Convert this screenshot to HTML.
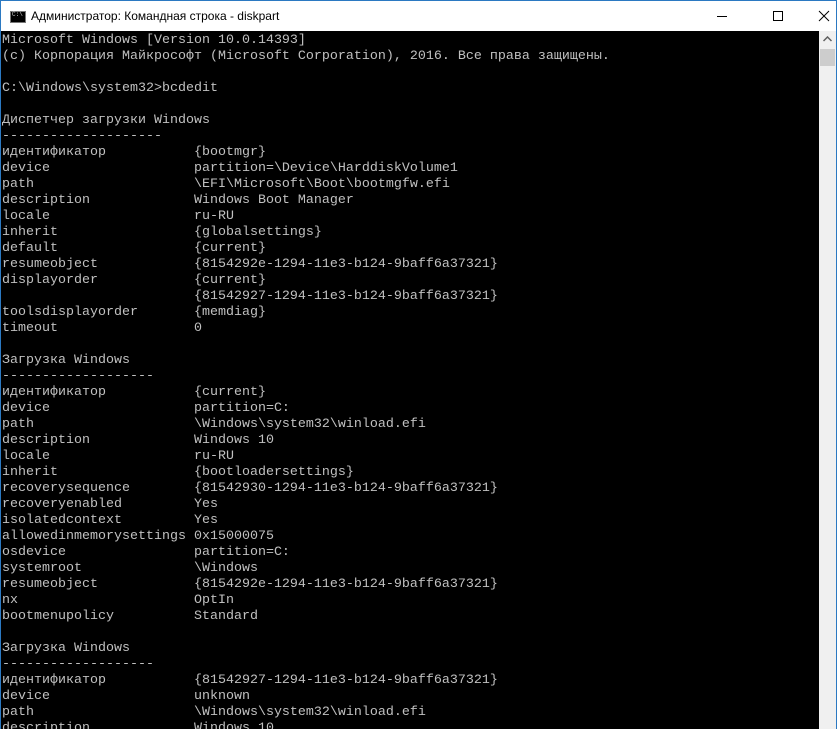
<!DOCTYPE html>
<html><head><meta charset="utf-8"><style>
html,body{margin:0;padding:0;width:837px;height:728px;overflow:hidden;background:#fff}
.win{position:absolute;left:0;top:0;width:835px;height:728px;border:1px solid #2b79c2;border-bottom:none;background:#fff}
.title{position:absolute;left:0;top:0;width:835px;height:30px;background:#fff;font-family:"Liberation Sans",sans-serif;font-size:12px;color:#000}
.title .t{position:absolute;left:30px;top:8px}
.icon{position:absolute;left:9px;top:10px;width:14px;height:10px;background:#000;border:1px solid #777}
.icon:after{content:"C:\\";position:absolute;left:1px;top:-1px;font-size:6px;color:#ccc;font-family:"Liberation Mono",monospace}
.con{position:absolute;left:0;top:30px;width:818px;height:698px;background:#000;overflow:hidden}
pre{margin:0;padding:2px 0 0 1px;font-family:"Liberation Mono",monospace;font-size:13.33px;line-height:16px;color:#c0c0c0}
.sb{position:absolute;left:818px;top:30px;width:17px;height:698px;background:#f0f0f0}
.thumb{position:absolute;left:1px;top:18px;width:15px;height:17px;background:#cdcdcd}
</style></head><body>
<div class="win">
<div class="title"><div class="icon"></div><span class="t">Администратор: Командная строка - diskpart</span>
<svg style="position:absolute;left:710px;top:8px" width="120" height="16">
<line x1="6" y1="7.5" x2="16" y2="7.5" stroke="#000" stroke-width="1"/>
<rect x="62.5" y="2.5" width="9" height="9" fill="none" stroke="#000"/>
<path d="M108 2 L118 12 M118 2 L108 12" stroke="#000" stroke-width="1"/>
</svg></div>
<div class="con"><pre>Microsoft Windows [Version 10.0.14393]
(c) Корпорация Майкрософт (Microsoft Corporation), 2016. Все права защищены.

C:\Windows\system32&gt;bcdedit

Диспетчер загрузки Windows
--------------------
идентификатор           {bootmgr}
device                  partition=\Device\HarddiskVolume1
path                    \EFI\Microsoft\Boot\bootmgfw.efi
description             Windows Boot Manager
locale                  ru-RU
inherit                 {globalsettings}
default                 {current}
resumeobject            {8154292e-1294-11e3-b124-9baff6a37321}
displayorder            {current}
                        {81542927-1294-11e3-b124-9baff6a37321}
toolsdisplayorder       {memdiag}
timeout                 0

Загрузка Windows
-------------------
идентификатор           {current}
device                  partition=C:
path                    \Windows\system32\winload.efi
description             Windows 10
locale                  ru-RU
inherit                 {bootloadersettings}
recoverysequence        {81542930-1294-11e3-b124-9baff6a37321}
recoveryenabled         Yes
isolatedcontext         Yes
allowedinmemorysettings 0x15000075
osdevice                partition=C:
systemroot              \Windows
resumeobject            {8154292e-1294-11e3-b124-9baff6a37321}
nx                      OptIn
bootmenupolicy          Standard

Загрузка Windows
-------------------
идентификатор           {81542927-1294-11e3-b124-9baff6a37321}
device                  unknown
path                    \Windows\system32\winload.efi
description             Windows 10</pre></div>
<div class="sb"><svg style="position:absolute;left:4px;top:5px" width="9" height="6"><path d="M0.5 5 L4.5 1 L8.5 5" fill="none" stroke="#606060" stroke-width="1.5"/></svg><div class="thumb"></div></div>
</div>
</body></html>
